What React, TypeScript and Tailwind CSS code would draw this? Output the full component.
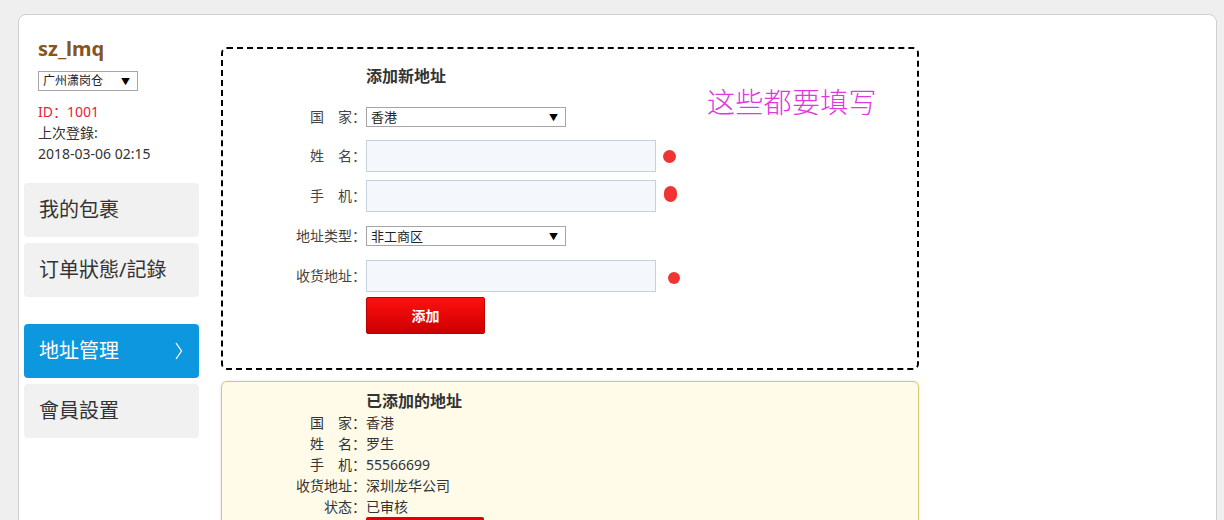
import React from "react";

const FakeSelect = ({ value, className }: { value: string; className: string }) => (
  <div className={"flex items-center justify-between bg-white border border-[#a6a6a6] " + className}>
    <span className="leading-none">{value}</span>
    <span className="text-[9px] leading-none text-black">▼</span>
  </div>
);

const Dot = ({ className }: { className: string }) => (
  <span className={"inline-block rounded-full bg-[#f03434] " + className} />
);

const menu = [
  { label: "我的包裹", gap: "mt-[19px]" },
  { label: "订单狀態/記錄", gap: "mt-[6px]" },
  { label: "地址管理", gap: "mt-[27px]", active: true },
  { label: "會員設置", gap: "mt-[6px]" },
];

const saved = [
  ["国　家：", "香港"],
  ["姓　名：", "罗生"],
  ["手　机：", "55566699"],
  ["收货地址：", "深圳龙华公司"],
  ["状态：", "已审核"],
];

export default function App() {
  return (
    <div className="min-h-screen bg-[#efefef] pt-[14px] pl-[18px] pr-[7px] font-['Noto_Sans','Noto_Sans_CJK_SC',sans-serif] text-[#333]">
      <div className="flex min-h-[600px] rounded-[8px] border border-[#cfcfcf] bg-white pl-[5px]">
        {/* sidebar */}
        <aside className="w-[175px] shrink-0">
          <div className="pl-[14px]">
            <div className="mt-[21px] text-[20px] font-bold leading-[26px] text-[#87531f]">sz_lmq</div>
            <FakeSelect value="广州潇岗仓" className="mt-[9px] h-[20px] w-[100px] pl-[4px] pr-[7px] text-[12px] text-[#222]" />
            <div className="mt-[10px] text-[14px] leading-[21px]">
              <div className="text-[#e4223a]">ID：1001</div>
              <div>上次登錄:</div>
              <div>2018-03-06 02:15</div>
            </div>
          </div>
          {menu.map((m) => (
            <div
              key={m.label}
              className={
                m.gap +
                " flex h-[54px] items-center justify-between rounded-[4px] pl-[15px] pr-[16px] text-[20px] " +
                (m.active ? "bg-[#0d97df] text-white" : "bg-[#f1f1f1] text-[#333]")
              }
            >
              <span>{m.label}</span>
              {m.active && (
                <svg width="8" height="18" viewBox="0 0 8 18" fill="none">
                  <path d="M1 1 L6.5 9 L1 17" stroke="white" strokeWidth="1.3" />
                </svg>
              )}
            </div>
          ))}
        </aside>

        {/* main */}
        <main className="ml-[22px] mt-[32px] w-[698px] shrink-0">
          <div className="relative rounded-[6px] border-2 border-dashed border-black pt-[17px] pb-[34px]">
            <div className="pl-[143px] text-[16px] font-bold leading-[20px] text-[#333]">添加新地址</div>

            <div className="mt-[21px] flex items-center text-[14px] leading-[20px] text-[#444]">
              <span className="w-[143px] text-right">国　家：</span>
              <FakeSelect value="香港" className="h-[20px] w-[200px] pl-[4px] pr-[7px] text-[13px] text-[#222]" />
            </div>
            <div className="mt-[13px] flex items-center text-[14px] leading-[20px] text-[#444]">
              <span className="w-[143px] text-right">姓　名：</span>
              <input className="h-[32px] w-[290px] border border-[#c4d0da] bg-[#f4f8fc]" />
              <Dot className="ml-[7px] h-[13px] w-[13px]" />
            </div>
            <div className="mt-[8px] flex items-center text-[14px] leading-[20px] text-[#444]">
              <span className="w-[143px] text-right">手　机：</span>
              <input className="h-[32px] w-[290px] border border-[#c4d0da] bg-[#f4f8fc]" />
              <Dot className="ml-[8px] -mt-[4px] h-[16px] w-[13px]" />
            </div>
            <div className="mt-[14px] flex items-center text-[14px] leading-[20px] text-[#444]">
              <span className="w-[143px] text-right">地址类型：</span>
              <FakeSelect value="非工商区" className="h-[20px] w-[200px] pl-[4px] pr-[7px] text-[13px] text-[#222]" />
            </div>
            <div className="mt-[14px] flex items-center text-[14px] leading-[20px] text-[#444]">
              <span className="w-[143px] text-right">收货地址：</span>
              <input className="h-[32px] w-[290px] border border-[#c4d0da] bg-[#f4f8fc]" />
              <Dot className="ml-[12px] mt-[4px] h-[12px] w-[12px]" />
            </div>
            <div className="mt-[5px] pl-[143px]">
              <button className="h-[37px] w-[119px] rounded-[2px] border border-[#b80000] bg-gradient-to-b from-[#ff1010] to-[#cc0000] text-[14px] font-bold leading-[20px] text-white">
                添加
              </button>
            </div>

            <div className="absolute left-[484px] top-[37px] text-[28px] font-light leading-[32px] tracking-[0.3px] text-[#e136e0]">
              这些都要填写
            </div>
          </div>

          <div className="mt-[11px] rounded-[6px] border border-[#d4cc6a] bg-[#fffbe8] pt-[8px] pb-6 shadow-[0_0_3px_rgba(0,0,0,0.12)]">
            <div className="pl-[144px] text-[16px] font-bold leading-[22px] text-[#333]">已添加的地址</div>
            {saved.map(([k, v]) => (
              <div key={k} className="flex text-[14px] leading-[21px] text-[#333]">
                <span className="w-[144px] text-right">{k}</span>
                <span>{v}</span>
              </div>
            ))}
            <div className="pl-[144px]">
              <div className="h-[37px] w-[118px] rounded-[2px] bg-gradient-to-b from-[#e00000] to-[#c00000]" />
            </div>
          </div>
        </main>
      </div>
    </div>
  );
}
